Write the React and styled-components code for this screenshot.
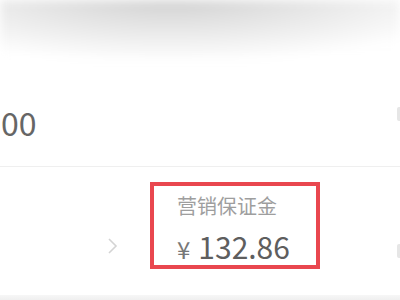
import React from "react";
import styled, { createGlobalStyle } from "styled-components";

const Global = createGlobalStyle`
  html, body { margin: 0; padding: 0; background: #fff; }
  body { font-family: "Noto Sans CJK SC", "Noto Sans", sans-serif; }
`;

const Page = styled.div`
  width: 400px;
  height: 300px;
  overflow: hidden;
  display: flex;
  flex-direction: column;
  background: #fff;
`;

const Haze = styled.div`
  height: 60px;
  flex: none;
  background:
    radial-gradient(ellipse 310px 62px at 170px 0px, rgba(205,205,205,0.9), rgba(255,255,255,0) 100%),
    #fff;
  filter: blur(5px);
`;

const Row = styled.div`
  display: flex;
  align-items: center;
  justify-content: space-between;
  height: ${(p) => p.$h}px;
  flex: none;
  border-bottom: ${(p) => (p.$divider ? "1px solid #efefef" : "none")};
`;

const BigNum = styled.span`
  font-size: 32px;
  line-height: 1;
  color: #666;
  padding-left: 1px;
  margin-top: 18px;
`;

const EdgeMark = styled.span`
  width: 3px;
  height: 14px;
  background: #e6e6e6;
  border-radius: 2px 0 0 2px;
  margin-top: ${(p) => p.$mt || 0}px;
`;

const CardRow = styled.div`
  display: flex;
  align-items: flex-start;
  height: 128px;
  flex: none;
`;

const Chevron = styled.svg`
  width: 11px;
  height: 18px;
  margin: 70px 0 0 107px;
  flex: none;
`;

const Card = styled.div`
  box-sizing: border-box;
  width: 170px;
  height: 87px;
  margin: 15px 0 0 32px;
  border: 4px solid #e9474f;
  padding: 9px 0 0 23px;
  display: flex;
  flex-direction: column;
  flex: none;
`;

const Label = styled.div`
  font-size: 20px;
  line-height: 22px;
  color: #9e9e9e;
`;

const Amount = styled.div`
  display: flex;
  align-items: baseline;
  margin-top: 14px;
  color: #5e5e5e;
  line-height: 1;
`;

const Yen = styled.span`
  font-size: 24px;
  color: #777;
  margin-right: 8px;
`;

const Value = styled.span`
  font-size: 30px;
`;

const RightEdge = styled.div`
  margin: 77px 0 0 auto;
  display: flex;
`;

const Footer = styled.div`
  flex: 1;
  background: linear-gradient(#f7f7f7, #efefef);
`;

export default function App() {
  return (
    <>
      <Global />
      <Page>
        <Haze />
        <Row $h={106} $divider>
          <BigNum>00</BigNum>
          <EdgeMark $mt={2} />
        </Row>
        <CardRow>
          <Chevron viewBox="0 0 11 18">
            <path d="M2 2 L9 9 L2 16" fill="none" stroke="#d4d4d4" strokeWidth="1.6" />
          </Chevron>
          <Card>
            <Label>营销保证金</Label>
            <Amount>
              <Yen>¥</Yen>
              <Value>132.86</Value>
            </Amount>
          </Card>
          <RightEdge>
            <EdgeMark />
          </RightEdge>
        </CardRow>
        <Footer />
      </Page>
    </>
  );
}
